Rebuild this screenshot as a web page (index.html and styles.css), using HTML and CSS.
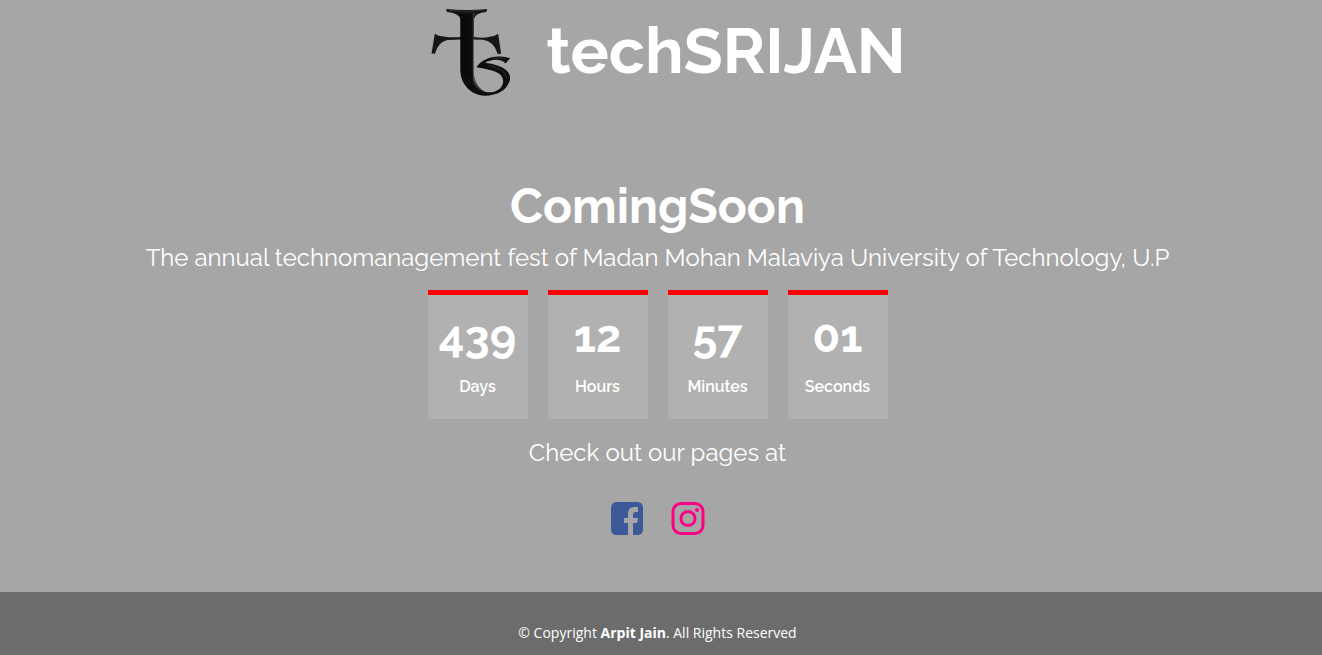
FILE: index.html
```
<!DOCTYPE html>
<html lang="en">
<head>
<meta charset="utf-8">
<meta name="viewport" content="width=device-width, initial-scale=1">
<title>techSRIJAN</title>
<link rel="stylesheet" href="styles.css">
</head>
<body>
<header class="brand">
  <svg class="brand-logo" viewBox="36 27 236 260" role="img" aria-label="techSRIJAN logo">
    <defs>
      <linearGradient id="stem" x1="0" x2="1" y1="0" y2="0">
        <stop offset="0" stop-color="#080808"/>
        <stop offset=".46" stop-color="#0c0c0c"/>
        <stop offset=".5" stop-color="#3c3c3c"/>
        <stop offset="1" stop-color="#262626"/>
      </linearGradient>
    </defs>
    <path fill="#161616" d="M80 27Q141 33 202 27L200 36Q166 38 162 58V111Q190 115 214 109Q231 106 235 100L244 160L234 162Q224 124 190 119L162 118H124L84 120Q56 125 46 161L36 160L46 100Q52 107 72 109Q96 113 124 111V58Q116 38 82 36Z"/>
    <path fill="url(#stem)" d="M118 38Q141 46 166 38Q162 46 162 58V212C162 246 178 268 204 277C166 285 122 262 122 206V58Q122 46 118 38Z"/>
    <path fill="#0e0e0e" d="M170 201C184 180 212 167 241 169Q256 169 271 174L257 190Q248 179 229 179Q208 180 196 188Q214 190 237 197C265 207 275 225 269 243C261 269 233 286 195 286C159 286 130 260 124 222L158 236Q168 276 207 276C236 276 251 258 250 241C248 224 234 216 217 211Q190 203 170 201Z"/>
    <path fill="none" stroke="#3c3c3c" stroke-width="2" d="M88 31Q141 36 194 31M215 174Q235 171 257 177M208 196C240 204 259 215 261 235"/>
  </svg>
  <h1 class="brand-name">techSRIJAN</h1>
</header>
<main class="hero">
  <h2 class="hero-title">ComingSoon</h2>
  <p class="lead">The annual technomanagement fest of Madan Mohan Malaviya University of Technology, U.P</p>
  <div class="countdown">
    <div class="unit"><span class="value">439</span><span class="label">Days</span></div>
    <div class="unit"><span class="value">12</span><span class="label">Hours</span></div>
    <div class="unit"><span class="value">57</span><span class="label">Minutes</span></div>
    <div class="unit"><span class="value">01</span><span class="label">Seconds</span></div>
  </div>
  <p class="lead">Check out our pages at</p>
  <nav class="social" aria-label="Social pages">
    <a class="facebook" href="#" aria-label="Facebook"><svg viewBox="0 0 34 34"><path fill="currentColor" d="M7 1H27Q33 1 33 7V28Q33 34 27 34H23V22H27L28 17H23V14Q23 11 26 11H28V6H24Q18 6 18 13V17H14V22H18V34H7Q1 34 1 28V7Q1 1 7 1Z"/></svg></a>
    <a class="instagram" href="#" aria-label="Instagram"><svg viewBox="0 0 34 34"><g fill="none" stroke="currentColor" stroke-width="3"><rect x="2" y="2.500" width="30" height="30" rx="8"/><circle cx="17" cy="17.500" r="7"/></g><circle cx="26" cy="9" r="2" fill="currentColor"/></svg></a>
  </nav>
</main>
<footer class="footer">
  <p class="copyright">© Copyright <strong>Arpit Jain</strong>. All Rights Reserved</p>
</footer>
</body>
</html>
```
FILE: styles.css
```
* {
  box-sizing: border-box;
}

body {
  display: flex;
  flex-direction: column;
  min-height: 100vh;
  margin: 0;
  background: #a6a6a6;
  color: #fff;
  font-family: Raleway, Inter, "Open Sans", sans-serif;
  text-align: center;
}

h1, h2, p {
  margin: 0;
}

.brand {
  display: flex;
  justify-content: center;
  align-items: flex-start;
  gap: 35px;
  padding: 9px 0 0 15px;
}

.brand-logo {
  width: 80px;
  height: 87px;
}

.brand-name {
  font-size: 64px;
  line-height: 84px;
  font-weight: 700;
}

.hero {
  display: flex;
  flex-direction: column;
  align-items: center;
  padding: 80px 7px 56px 0;
}

.hero-title {
  font-size: 48px;
  line-height: 60px;
  font-weight: 700;
}

.lead {
  font-size: 24px;
  line-height: 32px;
  margin: 6px 0 16px;
}

.countdown {
  display: flex;
  gap: 20px;
}

.unit {
  display: flex;
  flex-direction: column;
  gap: 12px;
  width: 100px;
  padding: 16px 0 20px;
  border-top: 5px solid #f00;
  background: #b1b1b1;
}

.value {
  font-size: 45px;
  line-height: 52px;
  font-weight: 700;
}

.label {
  font-size: 16px;
  line-height: 24px;
  font-weight: 600;
}

.countdown + .lead {
  margin: 18px 0 32px;
}

.social {
  display: flex;
  gap: 27px;
}

.social a {
  width: 34px;
  height: 35px;
}

.social svg {
  display: block;
  width: 34px;
  height: 34px;
}

.facebook {
  color: #3b5998;
}

.instagram {
  color: #ff0084;
}

.footer {
  flex: 1;
  padding: 30px 7px 12px 0;
  background: #6c6c6c;
}

.copyright {
  font-family: "Open Sans", sans-serif;
  font-size: 14px;
  line-height: 21px;
}
```
